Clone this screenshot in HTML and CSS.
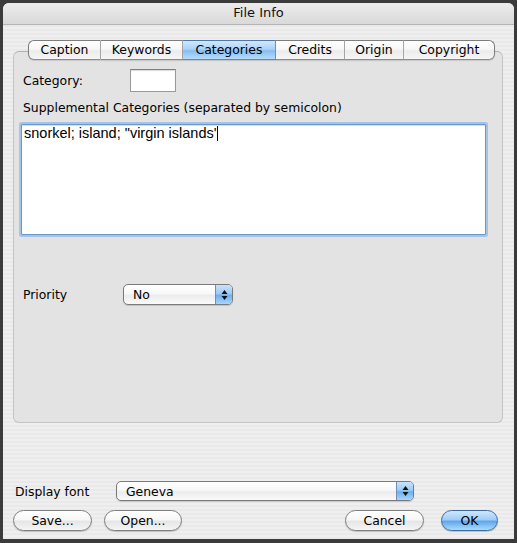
FILE: index.html
```html
<!DOCTYPE html>
<html>
<head>
<meta charset="utf-8">
<title>File Info</title>
<link rel="stylesheet" href="styles.css">
</head>
<body>
<div class="window">
  <div class="titlebar">File Info</div>
  <div class="content">
    <div class="tabs">
      <div class="tab first t-caption">Caption</div>
      <div class="tab t-keywords">Keywords</div>
      <div class="tab selected t-categories">Categories</div>
      <div class="tab t-credits">Credits</div>
      <div class="tab t-origin">Origin</div>
      <div class="tab last t-copyright">Copyright</div>
    </div>
    <div class="tabbox">
      <div class="row">
        <span class="label cat-label">Category:</span>
        <div class="field"></div>
      </div>
      <div class="label supp-label">Supplemental Categories (separated by semicolon)</div>
      <div class="textarea">snorkel; island; "virgin islands'<span class="caret"></span></div>
      <div class="row priority-row">
        <span class="label prio-label">Priority</span>
        <div class="popup prio-popup">
          <span class="popup-text">No</span>
          <span class="arrows"><svg width="7" height="12" viewBox="0 0 7 12"><path d="M3.5 1 L6.5 5 L0.5 5 Z" fill="#111"/><path d="M3.5 11 L6.5 7 L0.5 7 Z" fill="#111"/></svg></span>
        </div>
      </div>
    </div>
    <div class="row font-row">
      <span class="label font-label">Display font</span>
      <div class="popup font-popup">
        <span class="popup-text">Geneva</span>
        <span class="arrows"><svg width="7" height="12" viewBox="0 0 7 12"><path d="M3.5 1 L6.5 5 L0.5 5 Z" fill="#111"/><path d="M3.5 11 L6.5 7 L0.5 7 Z" fill="#111"/></svg></span>
      </div>
    </div>
    <div class="buttons">
      <div class="btn b-save">Save...</div>
      <div class="btn b-open">Open...</div>
      <div class="grow"></div>
      <div class="btn b-cancel">Cancel</div>
      <div class="btn default b-ok">OK</div>
    </div>
  </div>
</div>
</body>
</html>
```
FILE: styles.css
```css
* { box-sizing: border-box; }
html, body { margin: 0; padding: 0; }
body {
  background: #3b3b3b;
  width: 517px;
  height: 543px;
  padding: 3px 3px 0 3px;
  font-family: "DejaVu Sans", "Liberation Sans", sans-serif;
  font-size: 12.4px;
  color: #000;
}
.window {
  width: 511px;
  height: 536px;
  border-radius: 6px 6px 0 0;
  overflow: hidden;
  background: repeating-linear-gradient(to bottom, #efefef 0, #efefef 2px, #e9e9e9 2px, #e9e9e9 4px);
  display: flex;
  flex-direction: column;
}
.titlebar {
  height: 22px;
  flex: none;
  border-bottom: 1px solid #b4b4b4;
  background: linear-gradient(to bottom, #ececec, #d9d9d9);
  text-align: center;
  font-size: 13px;
  line-height: 20px;
  color: #111;
}
.content {
  flex: 1;
  padding: 15px 11px 0 10px;
  display: flex;
  flex-direction: column;
}
.tabs {
  display: flex;
  height: 20px;
  margin-left: 15px;
  position: relative;
  z-index: 2;
}
.tab {
  height: 20px;
  line-height: 18px;
  text-align: center;
  border-top: 1px solid #7d7d7d;
  border-bottom: 1px solid #8a8a8a;
  border-right: 1px solid #a9a9a9;
  background: linear-gradient(to bottom, #ffffff 0%, #f7f7f7 45%, #ebebeb 55%, #f6f6f6 100%);
  box-shadow: 0 1px 1px rgba(0,0,0,0.12);
}
.tab.first {
  border-left: 1px solid #7d7d7d;
  border-radius: 6px 0 0 6px;
}
.tab.last {
  border-right: 1px solid #7d7d7d;
  border-radius: 0 6px 6px 0;
}
.tab.selected {
  background: linear-gradient(to bottom, #d2e8fd 0%, #a9d2fa 45%, #86bdf1 55%, #b7ddfd 100%);
  border-top-color: #4f78a8;
  border-bottom-color: #5d85b5;
  border-right-color: #6f93bf;
}
.t-caption { width: 73px; }
.t-keywords { width: 82px; }
.t-categories { width: 93px; }
.t-credits { width: 69px; }
.t-origin { width: 59px; }
.t-copyright { width: 91px; }

.tabbox {
  margin-top: -9px;
  height: 372px;
  border: 1px solid #c4c4c4;
  border-top-color: #b0b0b0;
  border-radius: 6px;
  background: #e3e3e3;
  padding: 17px 9px 0 9px;
  display: flex;
  flex-direction: column;
  flex: none;
}
.row {
  display: flex;
  align-items: center;
}
.label { white-space: nowrap; }
.cat-label { width: 107px; }
.field {
  width: 46px;
  height: 23px;
  background: #fff;
  border: 1px solid #9a9a9a;
  border-top-color: #7f7f7f;
  box-shadow: inset 0 1px 1px rgba(0,0,0,0.15);
}
.supp-label {
  margin-top: 8px;
  line-height: 15px;
}
.textarea {
  margin: 9px 0 0 -2px;
  width: 465px;
  height: 111px;
  background: #fff;
  border: 1px solid #6c98cb;
  box-shadow: 0 0 0 2px #a4c3e5, inset 0 1px 1px rgba(0,0,0,0.15);
  border-radius: 1px;
  padding: 0 2px;
  font-family: "Liberation Sans", Arial, sans-serif;
  font-size: 14.5px;
  line-height: 17px;
}
.caret {
  display: inline-block;
  width: 1px;
  height: 15px;
  background: #000;
  vertical-align: -3px;
  margin-left: 1px;
}
.priority-row { margin-top: 49px; }
.prio-label { width: 100px; }

.popup {
  height: 21px;
  border: 1px solid #7a7a7a;
  border-radius: 5px;
  background: linear-gradient(to bottom, #ffffff 0%, #f8f8f8 45%, #ececec 55%, #fafafa 100%);
  display: flex;
  align-items: center;
  overflow: hidden;
  box-shadow: 0 1px 1px rgba(0,0,0,0.15);
}
.popup-text { flex: 1; padding-left: 9px; line-height: 19px; }
.arrows {
  width: 17px;
  height: 100%;
  display: flex;
  align-items: center;
  justify-content: center;
  border-left: 1px solid #6f8fb8;
  background: linear-gradient(to bottom, #c8e3fc 0%, #9ccbf6 45%, #6eb0ee 55%, #a6d6fd 100%);
}
.prio-popup { width: 110px; }

.font-row { margin-top: 58px; }
.font-label { width: 101px; margin-left: 2px; }
.font-popup { width: 298px; height: 20px; }

.buttons {
  display: flex;
  margin-top: 9px;
  padding-right: 5px;
}
.grow { flex: 1; }
.btn {
  height: 21px;
  border: 1px solid #7e7e7e;
  border-radius: 11px;
  background: linear-gradient(to bottom, #ffffff 0%, #f7f7f7 45%, #e6e6e6 55%, #f5f5f5 100%);
  box-shadow: 0 1px 1px rgba(0,0,0,0.2);
  text-align: center;
  line-height: 19px;
}
.btn.default {
  border-color: #3f6aa0;
  background: linear-gradient(to bottom, #cfe7fd 0%, #9fcdf7 45%, #62a7ec 55%, #a8dcfe 100%);
}
.b-save { width: 79px; }
.b-open { width: 78px; margin-left: 12px; }
.b-cancel { width: 79px; }
.b-ok { width: 57px; margin-left: 17px; }
```
